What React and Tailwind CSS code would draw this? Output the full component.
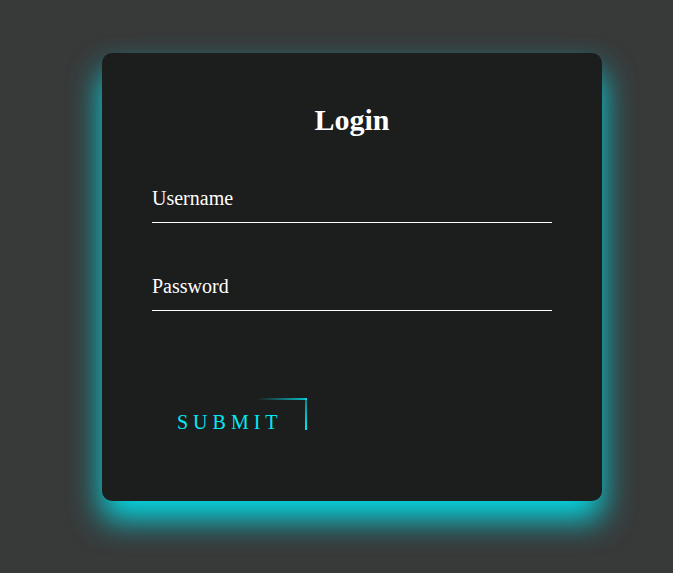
import React from "react";

const Field = ({ label, className = "" }) => (
    <div className={`border-b border-white pt-[10px] pb-[12px] ${className}`}>
        <label className="block text-[20px] leading-[23px] text-white">{label}</label>
    </div>
);

export default function App() {
    return (
        <div
            className="min-h-[573px] w-full bg-[#383939] pt-[53px] pl-[102px]"
            style={{ fontFamily: '"Liberation Serif", "Times New Roman", serif' }}
        >
            {/* Login box */}
            <div className="w-[500px] rounded-[10px] bg-[#1c1d1d] px-[50px] pt-[50px] pb-[56px] shadow-[0_18px_32px_#03dbe6]">
                <h2 className="mb-[40px] text-center text-[30px] font-bold leading-[34px] text-white">
                    Login
                </h2>

                <form onSubmit={(e) => e.preventDefault()}>
                    <Field label="Username" className="mb-[42px]" />
                    <Field label="Password" />

                    {/* Submit */}
                    <button
                        type="submit"
                        className="relative mt-[87px] block overflow-hidden pl-[25px] pr-[24px] pt-[13px] pb-[11px] text-[20px] leading-[23px] tracking-[5px] text-[#03e9f4] uppercase"
                    >
                        Submit
                        <span className="absolute top-0 right-0 h-[2px] w-[50px] bg-gradient-to-r from-transparent to-[#03e9f4]/80" />
                        <span className="absolute top-0 right-0 h-[32px] w-[2px] bg-gradient-to-b from-[#03e9f4]/50 to-[#03e9f4]" />
                    </button>
                </form>
            </div>
        </div>
    );
}
